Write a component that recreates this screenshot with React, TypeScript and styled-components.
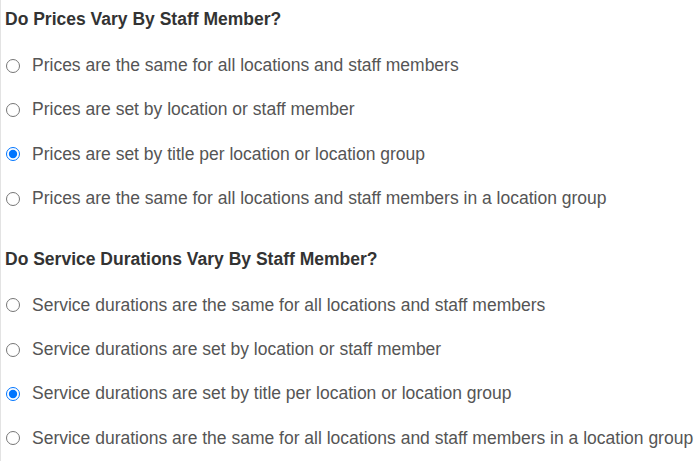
import React from "react";
import styled, { createGlobalStyle } from "styled-components";

const Global = createGlobalStyle`
  html, body { margin: 0; padding: 0; background: #fff; }
  body { font-family: "Liberation Sans", Arial, sans-serif; }
`;

const Page = styled.div`
  border-left: 1px solid #e3e3e3;
  min-height: 461px;
  box-sizing: border-box;
  padding: 9px 0 0 4px;
`;

const Section = styled.section`
  display: flex;
  flex-direction: column;
  margin-bottom: 28px;
`;

const Heading = styled.h3`
  margin: 0 0 14.5px 0;
  font-size: 17.5px;
  line-height: 20px;
  font-weight: bold;
  color: #333;
`;

const Option = styled.label`
  display: flex;
  align-items: center;
  height: 44.3px;
  gap: 12px;
  font-size: 17.5px;
  color: #555;
  cursor: pointer;
`;

const Radio = styled.input.attrs({ type: "radio" })`
  margin: 0 0 0 1px;
  width: 14px;
  height: 14px;
  accent-color: #0075ff;
  flex: none;
`;

const sections = [
  {
    name: "prices",
    title: "Do Prices Vary By Staff Member?",
    selected: 2,
    options: [
      "Prices are the same for all locations and staff members",
      "Prices are set by location or staff member",
      "Prices are set by title per location or location group",
      "Prices are the same for all locations and staff members in a location group",
    ],
  },
  {
    name: "durations",
    title: "Do Service Durations Vary By Staff Member?",
    selected: 2,
    options: [
      "Service durations are the same for all locations and staff members",
      "Service durations are set by location or staff member",
      "Service durations are set by title per location or location group",
      "Service durations are the same for all locations and staff members in a location group",
    ],
  },
];

export default function App() {
  return (
    <>
      <Global />
      <Page>
        {sections.map((s) => (
          <Section key={s.name}>
            <Heading>{s.title}</Heading>
            {s.options.map((o, i) => (
              <Option key={i}>
                <Radio name={s.name} defaultChecked={i === s.selected} />
                {o}
              </Option>
            ))}
          </Section>
        ))}
      </Page>
    </>
  );
}
